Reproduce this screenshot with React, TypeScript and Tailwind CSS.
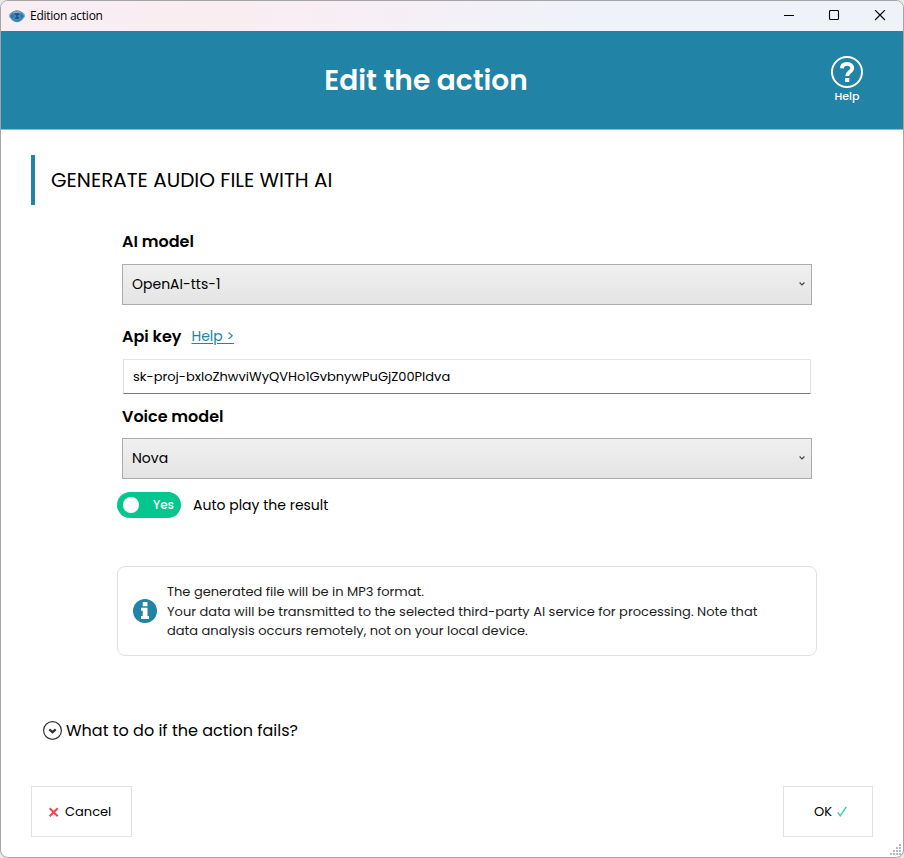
import React from "react";

const font = "font-['Poppins','Inter',sans-serif]";

function AppIcon() {
  return (
    <svg width="16" height="14" viewBox="0 0 16 14">
      <ellipse cx="8" cy="6.8" rx="8" ry="4.8" fill="#5fa3c8" />
      <ellipse cx="8" cy="7.2" rx="6.2" ry="6" fill="#3f88b6" />
      <path d="M3.5 3.2Q8 .4 12.5 3.2L11 4.6H5Z" fill="#8a9cc4" />
      <path d="M5.5 5h5M8 5v4M6.2 9h3.6" stroke="#1f4d7c" strokeWidth="1.5" fill="none" />
      <circle cx="3" cy="7" r="1.5" fill="#2b6f9f" />
      <circle cx="13" cy="7" r="1.5" fill="#2b6f9f" />
    </svg>
  );
}

function TitleBar() {
  return (
    <div className="flex h-[30px] shrink-0 items-center bg-linear-to-r from-[#f8eef4] via-[#faedf2] via-25% to-[#f0f2f9] to-65% pl-2">
      <AppIcon />
      <span className="ml-[5px] font-['Open_Sans','Noto_Sans',sans-serif] text-[12px] tracking-[-0.26px] text-black">
        Edition action
      </span>
      <svg className="mr-[17px] ml-auto" width="102" height="12" viewBox="0 0 102 12" fill="none" stroke="#000">
        <path d="M0 5.5h10" />
        <rect x="45.5" y="0.5" width="9" height="9" rx="1" strokeWidth="1.1" />
        <path d="M91 0l10 10M101 0L91 10" strokeWidth="1.1" />
      </svg>
    </div>
  );
}

function Header() {
  return (
    <header className="flex h-[99px] shrink-0 border-b border-[#8fc1d3] bg-[#2184a7] text-white">
      <div className="w-[16px]" />
      <h1 className="flex h-[99px] flex-1 items-center justify-center pl-[4px] text-[28px] font-semibold">
        Edit the action
      </h1>
      <button className="mr-[40px] flex w-[32px] flex-col items-center pt-[25px]">
        <svg width="32" height="32" viewBox="0 0 32 32" fill="none" stroke="#fff">
          <circle cx="16" cy="16" r="15" strokeWidth="2" />
          <path d="M10.9 12.4C11 9.3 13 7.8 16 7.8s5.2 1.7 5.2 4.4c0 3.4-5 3.8-5 7.8" strokeWidth="3.8" />
          <path d="M14.1 24h4.2" strokeWidth="4" />
        </svg>
        <span className="mt-px text-[11px] leading-[14px] font-medium">Help</span>
      </button>
    </header>
  );
}

function Select({ value }: { value: string }) {
  return (
    <div className="flex h-[41px] items-center border border-[#acacac] bg-linear-to-b from-[#f0f0f0] to-[#e4e4e4] pr-[6px] pl-[9px]">
      <span className="text-[14px]">{value}</span>
      <svg className="ml-auto" width="6" height="5" viewBox="0 0 6 5" fill="none" stroke="#444" strokeWidth="1.1">
        <path d="M.6 .5L3 3 5.4 .5" />
      </svg>
    </div>
  );
}

function InfoBox() {
  return (
    <div className="mt-12 -mx-[5px] flex h-[90px] items-center rounded-lg border border-[#e1e1e1] pl-[15px]">
      <svg width="24" height="24" viewBox="0 0 24 24" fill="#fff">
        <circle cx="12" cy="12" r="12" fill="#2184a7" />
        <rect x="9.7" y="3" width="4.8" height="4.2" rx=".5" />
        <path d="M8 8.8h6.5V17H16v3H8v-3h1.7v-5.2H8z" />
      </svg>
      <p className="ml-[10px] text-[13px] text-[#1c1c1c]">
        <span className="block leading-[19px]">The generated file will be in MP3 format.</span>
        <span className="block leading-[21px] whitespace-nowrap">
          Your data will be transmitted to the selected third-party AI service for processing. Note that
        </span>
        <span className="block leading-[18px]">data analysis occurs remotely, not on your local device.</span>
      </p>
    </div>
  );
}

export default function App() {
  return (
    <div className="h-[858px] w-[904px] bg-[#e8e8e8]">
      <div className={`relative flex h-full flex-col overflow-hidden rounded-lg border border-[#a5a5a5] bg-white text-black ${font}`}>
        <TitleBar />
        <Header />
        <main className="flex flex-col px-[30px] pt-[25px]">
          <h2 className="flex h-[50px] items-center border-l-4 border-[#2184a7] pl-4 text-[20px]">
            GENERATE AUDIO FILE WITH AI
          </h2>
          <section className="mt-6 mr-[61px] ml-[91px] flex flex-col">
            <label className="h-[25px] text-[16px] leading-[25px] font-semibold">AI model</label>
            <div className="mt-[10px]">
              <Select value="OpenAI-tts-1" />
            </div>
            <div className="mt-[19px] flex h-[25px] items-center">
              <label className="text-[16px] font-semibold">Api key</label>
              <a className="ml-[10px] text-[14px] text-[#2184a7] underline underline-offset-2">Help &gt;</a>
            </div>
            <div className="mx-px mt-[10px] flex h-[35px] items-center border border-[#e2e2e2] border-b-[#7a7a7a] pl-[9px] text-[13px]">
              sk-proj-bxIoZhwviWyQVHo1GvbnywPuGjZ00PIdva
            </div>
            <label className="mt-[10px] h-[25px] text-[16px] leading-[25px] font-semibold">Voice model</label>
            <div className="mt-[9px]">
              <Select value="Nova" />
            </div>
            <div className="mt-[13px] -ml-[5px] flex h-[26px] items-center">
              <div className="flex h-[26px] w-16 items-center rounded-full bg-[#05c68e] pr-[7px] pl-[6px] text-white">
                <span className="h-4 w-4 rounded-full bg-white" />
                <span className="ml-auto text-[12px] font-medium">Yes</span>
              </div>
              <span className="ml-3 text-[14px]">Auto play the result</span>
            </div>
            <InfoBox />
          </section>
          <div className="mt-[65px] ml-[12px] flex h-5 items-center">
            <svg width="19" height="20" viewBox="0 0 19 20" fill="none" stroke="#333">
              <circle cx="9.5" cy="9.5" r="8.9" strokeWidth="1.2" />
              <path d="M6.3 8.4l3.2 2.8 3.2-2.8" strokeWidth="2.2" />
            </svg>
            <span className="ml-[4px] text-[16px]">What to do if the action fails?</span>
          </div>
          <div className="mt-[45px] flex justify-between">
            <button className="flex h-[51px] w-[101px] items-center border border-[#e2e2e2] pl-[17px] text-[13px]">
              <svg width="10" height="10" viewBox="0 0 10 10" fill="none" stroke="#f8424e" strokeWidth="2">
                <path d="M.7 1.2l8 8M8.7 1.2l-8 8" />
              </svg>
              <span className="ml-[6px]">Cancel</span>
            </button>
            <button className="flex h-[51px] w-[90px] items-center border border-[#e2e2e2] pl-[30px] text-[13px]">
              <span>OK</span>
              <svg className="ml-[5px]" width="10" height="11" viewBox="0 0 10 11" fill="none" stroke="#35cdab" strokeWidth="1.4">
                <path d="M.7 6.3L3.2 9.8 9.3.8" />
              </svg>
            </button>
          </div>
        </main>
        <svg className="absolute right-px bottom-px" width="12" height="12" viewBox="0 0 12 12" fill="#b4b8c4">
          <path d="M9 0h2v2H9zM9 3h2v2H9zM6 3h2v2H6zM9 6h2v2H9zM6 6h2v2H6zM3 6h2v2H3zM9 9h2v2H9zM6 9h2v2H6zM3 9h2v2H3zM0 9h2v2H0z" />
        </svg>
      </div>
    </div>
  );
}
